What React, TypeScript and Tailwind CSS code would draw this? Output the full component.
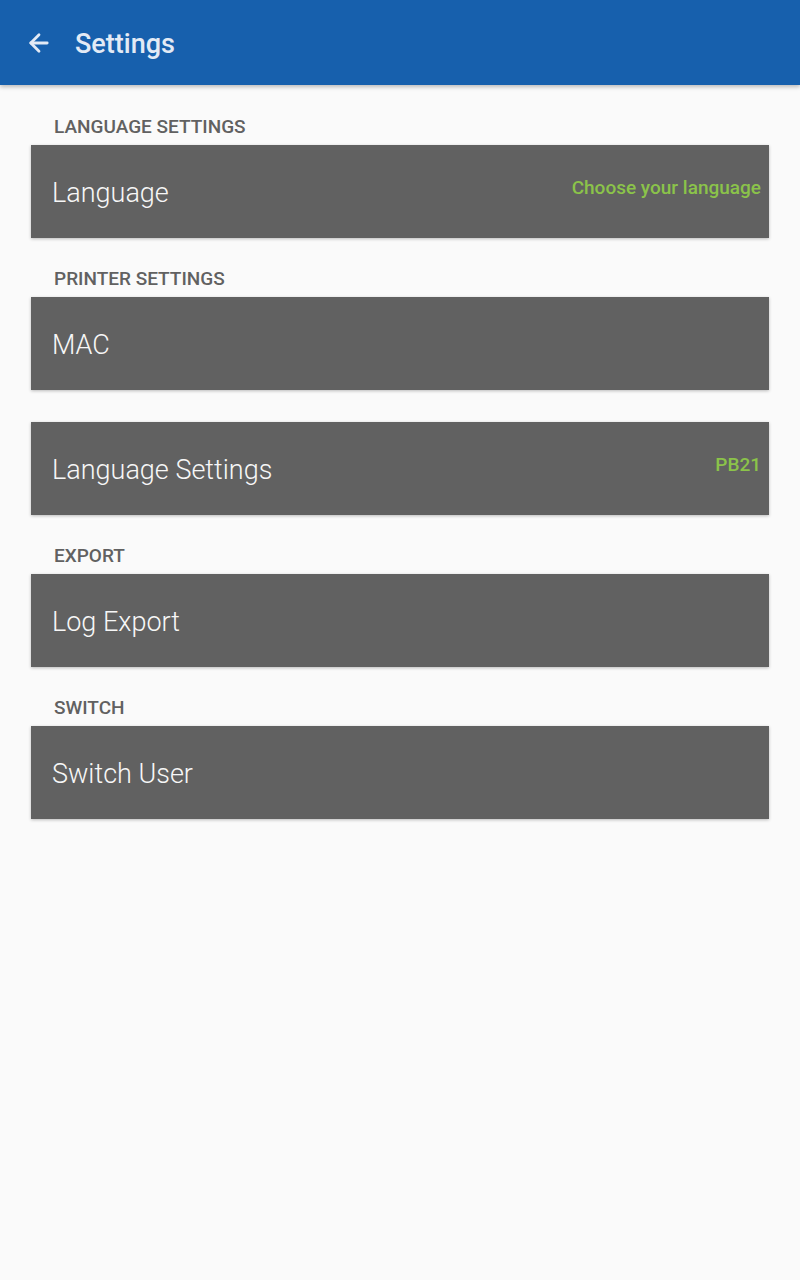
import { ArrowLeft } from "lucide-react";

type Row = { title: string; value?: string };

const sections: { label?: string; rows: Row[] }[] = [
    { label: "LANGUAGE SETTINGS", rows: [{ title: "Language", value: "Choose your language" }] },
    { label: "PRINTER SETTINGS", rows: [{ title: "MAC" }, { title: "Language Settings", value: "PB21" }] },
    { label: "EXPORT", rows: [{ title: "Log Export" }] },
    { label: "SWITCH", rows: [{ title: "Switch User" }] },
];

function Card({ row }: { row: Row }) {
    return (
        <div className="relative mx-[31px] flex h-[93px] items-center bg-[#616161] pl-[21px] pt-[4px] shadow-[0_1px_3px_rgba(0,0,0,0.25)]">
            <span className="text-[27px] font-light text-[#f7f7f7]">{row.title}</span>
            {row.value && (
                <span className="absolute right-[8px] top-[31px] text-[19px] font-medium leading-[24px] text-[#8bc34a]">
                    {row.value}
                </span>
            )}
        </div>
    );
}

export default function App() {
    return (
        <div className="min-h-[1280px] bg-[#fafafa]" style={{ fontFamily: "Roboto, 'Noto Sans', sans-serif" }}>
            {/* Toolbar */}
            <header className="flex h-[85px] items-center bg-[#1760ad] shadow-[0_2px_4px_rgba(0,0,0,0.25)]">
                <ArrowLeft className="ml-[25px] h-[28px] w-[28px] text-[#e3eaf5]" strokeWidth={2.4} />
                <h1 className="ml-[22px] mt-[3px] text-[27px] font-medium text-[#e3eaf5]">Settings</h1>
            </header>

            {sections.map((s, i) => (
                <section key={i}>
                    <div className={`flex items-end pb-[6px] pl-[54px] ${i === 0 ? "h-[60px]" : "h-[59px]"}`}>
                        <span className="text-[19px] font-medium leading-[24px] text-[#616161]">{s.label}</span>
                    </div>
                    <div className="flex flex-col gap-[32px]">
                        {s.rows.map((r) => (
                            <Card key={r.title} row={r} />
                        ))}
                    </div>
                </section>
            ))}
        </div>
    );
}
